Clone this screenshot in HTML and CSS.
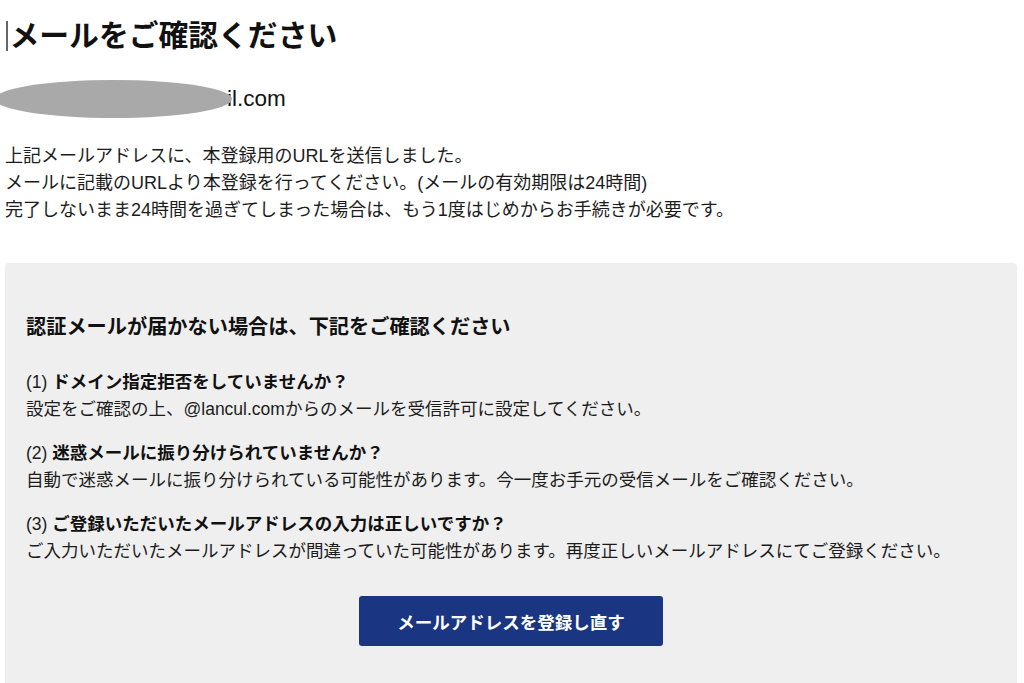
FILE: index.html
```html
<!DOCTYPE html>
<html lang="ja">
<head>
<meta charset="utf-8">
<title>メールをご確認ください</title>
<link rel="stylesheet" href="styles.css">
</head>
<body>
<main class="page">
  <h1 class="title"><span class="caret"></span>メールをご確認ください</h1>
  <div class="email-row">
    <span class="redact"></span><span class="email">il.com</span>
  </div>
  <p class="lead">上記メールアドレスに、本登録用のURLを送信しました。<br>メールに記載のURLより本登録を行ってください。(メールの有効期限は24時間)<br>完了しないまま24時間を過ぎてしまった場合は、もう1度はじめからお手続きが必要です。</p>
  <section class="help">
    <h2 class="help-title">認証メールが届かない場合は、下記をご確認ください</h2>
    <div class="item">
      <p class="item-q"><span class="num">(1)</span> <b>ドメイン指定拒否をしていませんか？</b></p>
      <p class="item-a">設定をご確認の上、@lancul.comからのメールを受信許可に設定してください。</p>
    </div>
    <div class="item">
      <p class="item-q"><span class="num">(2)</span> <b>迷惑メールに振り分けられていませんか？</b></p>
      <p class="item-a">自動で迷惑メールに振り分けられている可能性があります。今一度お手元の受信メールをご確認ください。</p>
    </div>
    <div class="item">
      <p class="item-q"><span class="num">(3)</span> <b>ご登録いただいたメールアドレスの入力は正しいですか？</b></p>
      <p class="item-a">ご入力いただいたメールアドレスが間違っていた可能性があります。再度正しいメールアドレスにてご登録ください。</p>
    </div>
    <div class="actions">
      <button class="btn" type="button">メールアドレスを登録し直す</button>
    </div>
  </section>
</main>
</body>
</html>
```
FILE: styles.css
```css
html, body {
  margin: 0;
  padding: 0;
  background: #ffffff;
}
body {
  font-family: "Liberation Sans", "Noto Sans CJK JP", sans-serif;
  color: #1c1c1c;
  overflow: hidden;
}
.page {
  padding: 16px 7px 0 5px;
}
.title {
  margin: 0;
  font-size: 29.8px;
  line-height: 40px;
  font-weight: 700;
  color: #111;
  display: flex;
  align-items: center;
}
.caret {
  display: inline-block;
  width: 1.5px;
  height: 30px;
  background: #666;
  margin: 0 2px 0 1px;
}
.email-row {
  margin-top: 24px;
  height: 38px;
  display: flex;
  align-items: center;
}
.redact {
  display: block;
  width: 237px;
  height: 38px;
  margin-left: -10px;
  border-radius: 50%;
  background: #a9a9a9;
  position: relative;
  z-index: 1;
}
.email {
  font-size: 22.5px;
  margin-left: -5px;
  color: #111;
}
.lead {
  margin: 25px 0 0 0;
  font-size: 18px;
  line-height: 27px;
}
.help {
  margin-top: 39px;
  background: #efefef;
  border-radius: 4px;
  padding: 50px 21px 48px 21px;
}
.help-title {
  margin: 0;
  font-size: 20.2px;
  line-height: 28px;
  font-weight: 700;
  color: #111;
}
.item {
  margin-top: 28px;
  font-size: 17.5px;
  line-height: 27px;
}
.item + .item {
  margin-top: 17px;
}
.item-q, .item-a {
  margin: 0;
}
.item-q b {
  font-weight: 700;
  color: #111;
}
.actions {
  margin-top: 31px;
  display: flex;
  justify-content: center;
}
.btn {
  width: 304px;
  height: 50px;
  border: none;
  border-radius: 3px;
  background: #1a3582;
  color: #ffffff;
  font-family: "Liberation Sans", "Noto Sans CJK JP", sans-serif;
  font-size: 17.5px;
  font-weight: 700;
  cursor: pointer;
}
```
